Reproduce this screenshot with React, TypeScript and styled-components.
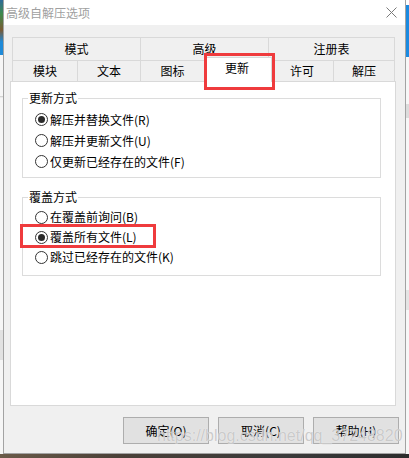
import React from 'react'
import styled, { createGlobalStyle } from 'styled-components'

const GlobalStyle = createGlobalStyle`
  html, body {
    margin: 0;
    padding: 0;
    background: #f3f3f3;
  }
  body {
    font-family: "Noto Sans CJK SC", "Noto Sans", sans-serif;
    font-size: 12px;
    color: #000;
  }
`

const topTabs = ['模式', '高级', '注册表']
const bottomTabs = ['模块', '文本', '图标', '更新', '许可', '解压']

const updateModes = ['解压并替换文件(R)', '解压并更新文件(U)', '仅更新已经存在的文件(F)']
const overwriteModes = ['在覆盖前询问(B)', '覆盖所有文件(L)', '跳过已经存在的文件(K)']

const App: React.FC = () => {
  return (
    <>
      <GlobalStyle />
      <Desktop>
        <LeftEdge />
        <Window>
          <TitleBar>
            <Title>高级自解压选项</Title>
            <svg width="11" height="11" viewBox="0 0 11 11">
              <path d="M0.5 0.5 L10.5 10.5 M10.5 0.5 L0.5 10.5" stroke="#7a7a7a" strokeWidth="1" fill="none" />
            </svg>
          </TitleBar>

          <Body>
            <Tabs>
              <TabRow $cols="128px 128px 127px" $h={23}>
                {topTabs.map((t) => (
                  <Tab key={t}>{t}</Tab>
                ))}
              </TabRow>
              <TabRow $cols="65px 63px 64px 66px 63px 62px" $h={21}>
                {bottomTabs.map((t) => (
                  <Tab key={t} $active={t === '更新'}>
                    {t}
                  </Tab>
                ))}
              </TabRow>
            </Tabs>

            <Panel>
              <Group $pt={3} $pb={5}>
                <Legend>更新方式</Legend>
                {updateModes.map((m, i) => (
                  <RadioRow key={m} $h={21}>
                    <Radio $on={i === 0} />
                    {m}
                  </RadioRow>
                ))}
              </Group>

              <Group $pt={2} $pb={8} $mt={11}>
                <Legend>覆盖方式</Legend>
                {overwriteModes.map((m, i) => (
                  <RadioRow key={m} $h={20}>
                    <Radio $on={i === 1} />
                    {m}
                  </RadioRow>
                ))}
              </Group>
            </Panel>

            <ButtonRow>
              <Button>确定(O)</Button>
              <Button>取消(C)</Button>
              <Button>帮助(H)</Button>
            </ButtonRow>
          </Body>

          <Highlight $x={200} $y={53} $w={71} $h={37} />
          <Highlight $x={16} $y={224} $w={136} $h={24} />
          <Watermark>https://blog.csdn.net/qq_37248820</Watermark>
        </Window>
        <RightEdge />
        <BottomEdge />
      </Desktop>
    </>
  )
}

const Desktop = styled.div`
  display: grid;
  grid-template-columns: 3px 403px 3px;
  grid-template-rows: 454px 4px;
  width: 409px;
  height: 458px;
  overflow: hidden;
`

const LeftEdge = styled.div`
  background: linear-gradient(
    to bottom,
    #2f6b9a 0px,
    #3f8a4a 14px,
    #7a5a34 30px,
    #1f8ad8 42px,
    #1f8ad8 55px,
    #f6f6f6 55px,
    #f6f6f6 96px,
    #c8c8c8 96px,
    #f6f6f6 98px,
    #f6f6f6 330px,
    #e2e2e2 330px,
    #e2e2e2 360px,
    #f6f6f6 360px
  );
`

const RightEdge = styled.div`
  background: linear-gradient(
    to bottom,
    #ffffff 0px,
    #ffffff 5px,
    #1b8ae0 5px,
    #1b8ae0 57px,
    #f7f7f7 57px,
    #f7f7f7 104px,
    #dcdcdc 104px,
    #dcdcdc 118px,
    #f7f7f7 118px,
    #f7f7f7 290px,
    #e4e4e4 290px,
    #e4e4e4 310px,
    #f7f7f7 310px
  );
`

const BottomEdge = styled.div`
  grid-column: 1 / -1;
  background: linear-gradient(to right, #6a5a48 0%, #4a4038 30%, #3a3a3a 70%, #2c2c2c 100%);
`

const Window = styled.div`
  position: relative;
  box-sizing: border-box;
  display: flex;
  flex-direction: column;
  background: #f0f0f0;
  border: 1px solid #a3a3a3;
  border-top: none;
`

const TitleBar = styled.div`
  display: flex;
  align-items: center;
  justify-content: space-between;
  height: 25px;
  padding: 0 8px 0 2px;
  background: #fff;
`

const Title = styled.span`
  font-size: 12px;
  line-height: 16px;
  color: #a0a0a0;
`

const Body = styled.div`
  display: flex;
  flex-direction: column;
  padding: 12px 0 0 6px;
`

const Tabs = styled.div`
  display: flex;
  flex-direction: column;
  margin-left: 2px;
  width: 383px;
`

const TabRow = styled.div<{ $cols: string; $h: number }>`
  display: grid;
  grid-template-columns: ${(p) => p.$cols};
  height: ${(p) => p.$h}px;
`

const Tab = styled.div<{ $active?: boolean }>`
  display: flex;
  align-items: center;
  justify-content: center;
  box-sizing: border-box;
  border-top: 1px solid #d9d9d9;
  border-left: 1px solid #d9d9d9;
  line-height: 16px;
  color: #000;

  &:last-child {
    border-right: 1px solid #d9d9d9;
  }

  ${(p) =>
    p.$active &&
    `
    margin: -3px -2px -1px 0;
    padding: 0 2px 5px 0;
    background: #fff;
    border-right: 1px solid #d9d9d9;
    z-index: 1;
  `}
`

const Panel = styled.div`
  box-sizing: border-box;
  display: flex;
  flex-direction: column;
  width: 386px;
  height: 325px;
  padding-top: 8px;
  background: #fff;
  border: 1px solid #d9d9d9;
`

const Group = styled.fieldset<{ $pt: number; $pb: number; $mt?: number }>`
  margin: ${(p) => p.$mt || 0}px 14px 0 11px;
  padding: ${(p) => p.$pt}px 0 ${(p) => p.$pb}px 5px;
  border: 1px solid #dcdcdc;
  min-width: 0;
`

const Legend = styled.legend`
  padding: 0 1px;
  font-size: 12px;
  line-height: 16px;
  color: #000;
`

const RadioRow = styled.div<{ $h: number }>`
  display: flex;
  align-items: center;
  gap: 2px;
  height: ${(p) => p.$h}px;
  padding-left: 7px;
  font-size: 12px;
  line-height: 16px;
  white-space: nowrap;
`

const Radio = styled.span<{ $on?: boolean }>`
  display: inline-flex;
  align-items: center;
  justify-content: center;
  flex: none;
  box-sizing: border-box;
  width: 13px;
  height: 13px;
  border: 1px solid #333;
  border-radius: 50%;
  background: #fff;

  &::after {
    content: '';
    display: ${(p) => (p.$on ? 'block' : 'none')};
    width: 7px;
    height: 7px;
    border-radius: 50%;
    background: #2b2b2b;
  }
`

const ButtonRow = styled.div`
  display: flex;
  justify-content: flex-end;
  gap: 9px;
  margin-top: 11px;
  padding-right: 6px;
`

const Button = styled.button`
  box-sizing: border-box;
  width: 86px;
  height: 27px;
  padding: 0;
  background: #e1e1e1;
  border: 1px solid #adadad;
  border-radius: 0;
  font-family: "Noto Sans CJK SC", "Noto Sans", sans-serif;
  font-size: 12px;
  line-height: 16px;
  color: #000;
`

const Highlight = styled.div<{ $x: number; $y: number; $w: number; $h: number }>`
  position: absolute;
  left: ${(p) => p.$x}px;
  top: ${(p) => p.$y}px;
  width: ${(p) => p.$w}px;
  height: ${(p) => p.$h}px;
  box-sizing: border-box;
  border: 3px solid #ef3b3d;
  pointer-events: none;
  z-index: 2;
`

const Watermark = styled.div`
  position: absolute;
  left: 153px;
  top: 428px;
  font-family: "Liberation Sans", Arial, sans-serif;
  font-size: 16px;
  line-height: 16px;
  color: rgba(190, 190, 190, 0.8);
  text-shadow: 0 0 1px rgba(255, 255, 255, 0.9);
  white-space: nowrap;
  pointer-events: none;
  z-index: 3;
`

export default App
